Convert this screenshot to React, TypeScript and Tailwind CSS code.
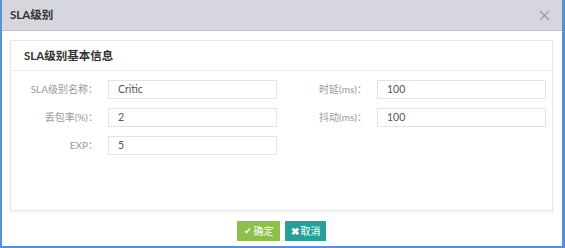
import React from 'react';

const fieldsLeft = [
  { label: 'SLA级别名称：', value: 'Critic' },
  { label: '丢包率(%)：', value: '2' },
  { label: 'EXP：', value: '5' },
];

const fieldsRight = [
  { label: '时延(ms)：', value: '100' },
  { label: '抖动(ms)：', value: '100' },
];

const Field: React.FC<{ label: string; value: string; labelW: string }> = ({ label, value, labelW }) => (
  <div className="flex items-center h-[19px]">
    <div className={`${labelW} shrink-0 text-right pr-[10px] text-[10px] text-[#999]`}>{label}</div>
    <div className="w-[169px] h-[19px] border border-[#e3e3e3] bg-white flex items-center pl-[9px] text-[10.5px] text-[#555]">
      {value}
    </div>
  </div>
);

const App: React.FC = () => {
  return (
    <div
      className="w-[565px] h-[248px] flex flex-col bg-white border-l-2 border-r-[3px] border-b-2 border-[#5a8fd3]"
      style={{ fontFamily: 'Lato, "Noto Sans CJK SC", sans-serif' }}
    >
      <div className="h-[31px] shrink-0 bg-[#d5d6de] border-b border-[#c3c5ce] flex items-center justify-between pl-[8px] pr-[12px]">
        <span className="text-[11.5px] font-bold text-[#333]">SLA级别</span>
        <svg width="11" height="11" viewBox="0 0 11 11" className="text-[#999]">
          <path d="M1 1L10 10M10 1L1 10" stroke="currentColor" strokeWidth="1.1" />
        </svg>
      </div>

      <div className="flex-1 flex flex-col pt-[9px] pl-[8px] pr-[9px]">
        <div className="h-[171px] border border-[#e6e6e6] shadow-[0_1px_2px_rgba(0,0,0,0.08)] bg-white">
          <div className="h-[30px] border-b border-[#ececec] flex items-center pl-[13px]">
            <span className="text-[11.5px] font-bold text-[#333]">SLA级别基本信息</span>
          </div>
          <div className="flex pt-[9px]">
            <div className="flex flex-col gap-[9px]">
              {fieldsLeft.map((f) => (
                <Field key={f.label} label={f.label} value={f.value} labelW="w-[97px]" />
              ))}
            </div>
            <div className="flex flex-col gap-[9px]">
              {fieldsRight.map((f) => (
                <Field key={f.label} label={f.label} value={f.value} labelW="w-[100px]" />
              ))}
            </div>
          </div>
        </div>

        <div className="flex justify-center gap-[5px] mt-[10px]">
          <button className="h-[20px] w-[43px] bg-[#8cc04a] text-white text-[10px] flex items-center justify-center gap-[2px]">
            <span className="text-[9px]">✔</span>确定
          </button>
          <button className="h-[20px] w-[41px] bg-[#2a9f97] text-white text-[10px] flex items-center justify-center gap-[2px]">
            <span className="text-[10px] font-bold">✖</span>取消
          </button>
        </div>
      </div>
    </div>
  );
};

export default App;
